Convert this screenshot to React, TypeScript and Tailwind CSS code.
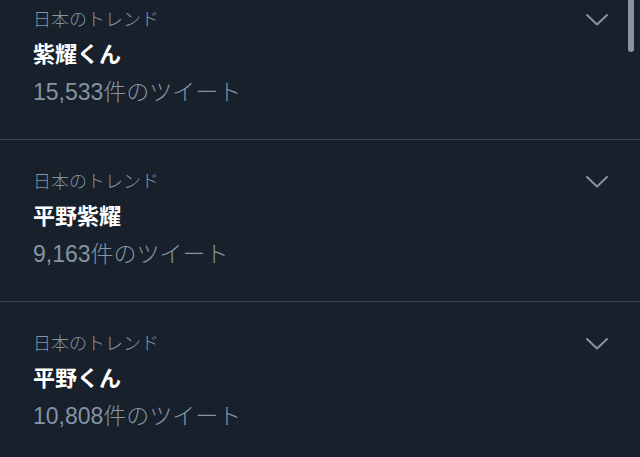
const trends = [
  { label: '日本のトレンド', name: '紫耀くん', count: '15,533件のツイート' },
  { label: '日本のトレンド', name: '平野紫耀', count: '9,163件のツイート' },
  { label: '日本のトレンド', name: '平野くん', count: '10,808件のツイート' },
]

function Chevron() {
  return (
    <svg width="24" height="14" viewBox="0 0 24 14" className="mt-[5px] text-[#8494a2]">
      <polyline points="2,2 12,11.5 22,2" fill="none" stroke="currentColor" strokeWidth="2" strokeLinecap="round" strokeLinejoin="round" />
    </svg>
  )
}

export default function App() {
  return (
    <div
      className="relative w-[640px] h-[457px] overflow-hidden bg-[#17202b] text-white"
      style={{ fontFamily: '"Liberation Sans", "Noto Sans CJK JP", sans-serif' }}
    >
      <div className="-mt-[22px]">
        {trends.map((t) => (
          <div key={t.name} className="flex border-b border-[#38444d] pl-[33px] pr-[31px] pt-[30px] pb-[31px]">
            <div className="flex-1 flex flex-col">
              <span className="text-[18px] leading-[24px] font-light text-[#8494a2]">{t.label}</span>
              <span className="mt-[7px] text-[22px] leading-[32px] font-bold">{t.name}</span>
              <span className="mt-[5px] text-[23px] leading-[32px] font-light text-[#8494a2]">{t.count}</span>
            </div>
            <Chevron />
          </div>
        ))}
      </div>

      {/* scrollbar */}
      <div className="absolute right-[6px] top-0 w-[6px] h-[52px] rounded-b-full bg-[#8a939c]" />
    </div>
  )
}
